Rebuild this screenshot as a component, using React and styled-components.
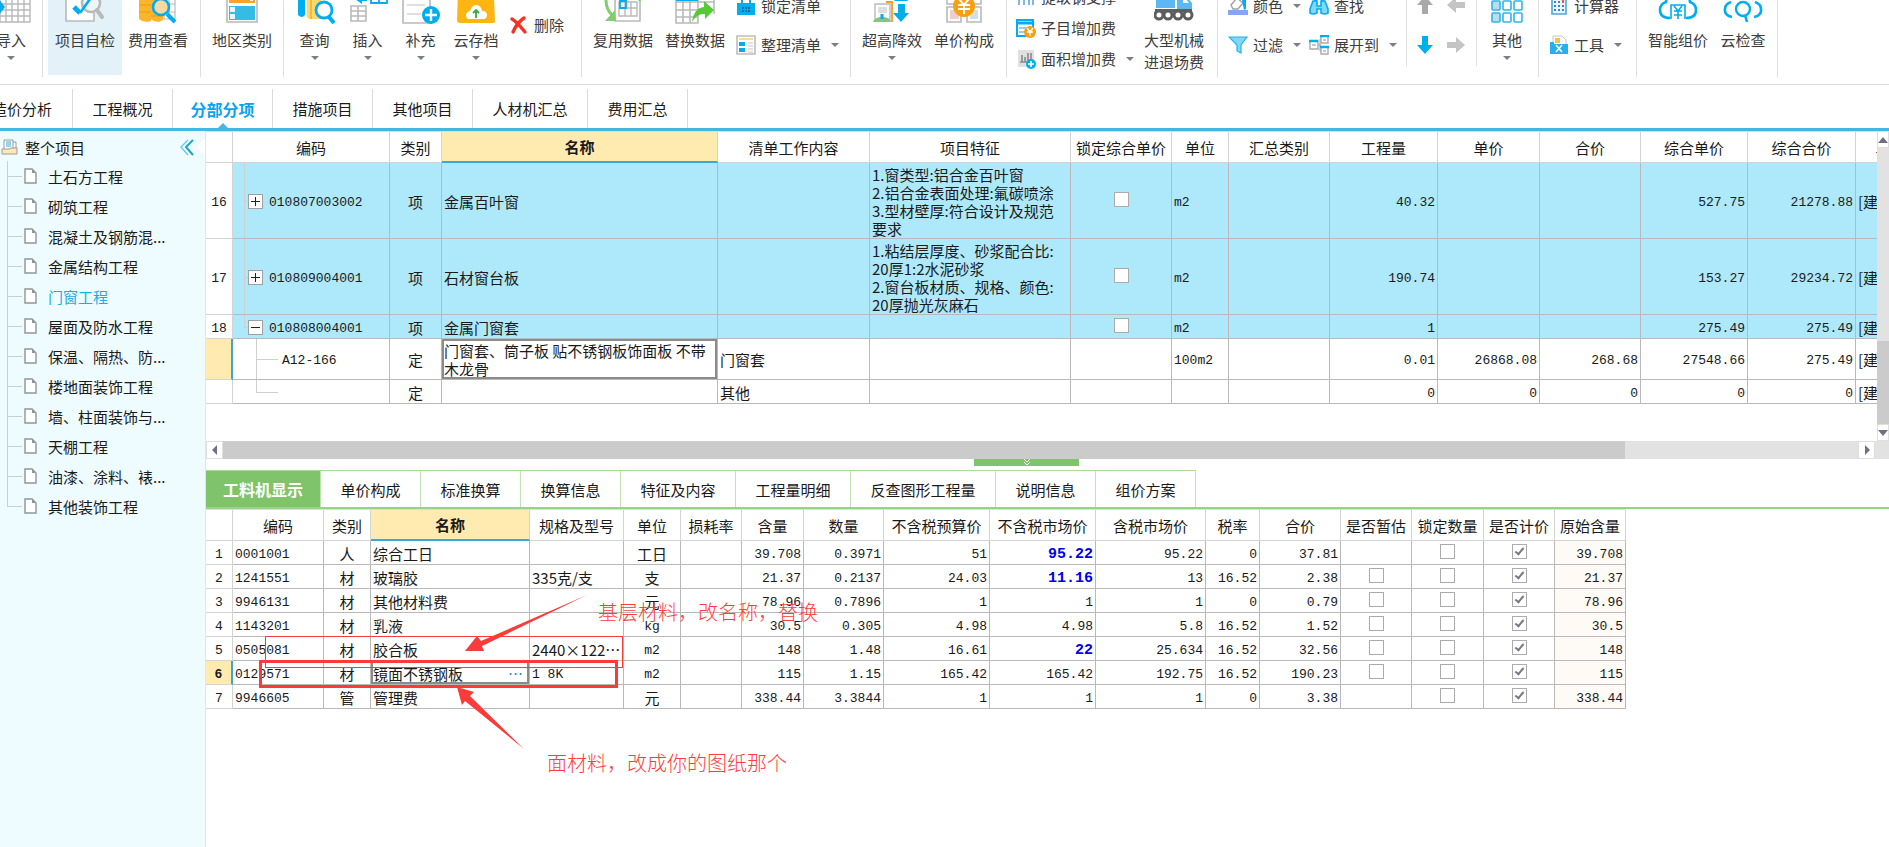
import React from "react";
import styled, { createGlobalStyle, css } from "styled-components";

const Global = createGlobalStyle`
  *, *::before, *::after { box-sizing: border-box; }
  body {
    margin: 0;
    background: #fff;
    color: #1a1a1a;
    font-family: "Noto Sans CJK SC", "Liberation Sans", sans-serif;
    font-size: 15px;
    overflow: hidden;
  }
  button { font: inherit; color: inherit; background: none; border: 0; padding: 0; margin: 0; }
`;

const c = {
  blue: "#00adef",
  line: "#45b5e2",
  gray: "#b9b9b9",
  green: "#7fc46a",
  orange: "#fb9f0c",
  row: "#aee9fb",
  mark: "#fb3a3a",
};

/* ---------- page frame ---------- */

const Page = styled.div`
  min-height: 100vh;
  display: flex;
  flex-direction: column;
`;

const Ribbon = styled.header`
  display: flex;
  height: 85px;
  border-bottom: 1px solid #dcdcdc;
  overflow: hidden;
`;

const Group = styled.section`
  display: flex;
  flex: none;
  width: ${(p) => p.$w}px;
  height: ${(p) => (p.$short ? 66 : 77)}px;
  padding-left: ${(p) => p.$pad || 0}px;
  justify-content: ${(p) => (p.$end ? "flex-end" : "flex-start")};
  border-right: 1px solid #dedede;
`;

const BigButton = styled.button`
  display: flex;
  flex: none;
  flex-direction: column;
  align-items: center;
  width: ${(p) => p.$w || 72}px;
  height: 75px;
  background: ${(p) => (p.$on ? "#e2f2f8" : "none")};
  line-height: 22px;
  white-space: nowrap;
  color: #3c3c3c;

  svg.art { flex: none; width: 40px; height: 36px; margin: -12px 0 5px; }
`;

const Caret = styled.span`
  border: 4px solid transparent;
  border-top-color: #7b7e89;
  border-bottom: 0;
  margin: ${(p) => (p.$below ? "5px 0 0" : "0 0 0 5px")};
`;

const Rows = styled.div`
  display: flex;
  flex: none;
  flex-direction: column;
  align-items: flex-start;
  gap: ${(p) => (p.$three ? 11 : 19)}px;
  margin: ${(p) => (p.$single ? 15 : p.$three ? -13 : -4)}px ${(p) => p.$mr || 0}px 0 ${(p) => p.$ml || 0}px;
`;

const SmallButton = styled.button`
  display: flex;
  align-items: center;
  gap: 5px;
  height: 20px;
  line-height: 20px;
  white-space: nowrap;
  color: #3c3c3c;

  svg { flex: none; width: 20px; height: 20px; }
`;

const Tabs = styled.nav`
  display: flex;
  height: 46px;
  padding-top: 4px;
  border-bottom: 3px solid ${c.line};
`;

const Tab = styled.button`
  position: relative;
  flex: none;
  width: ${(p) => p.$w}px;
  margin-left: ${(p) => p.$shift || 0}px;
  border-right: 1px solid #dcdcdc;
  font-weight: ${(p) => (p.$on ? 700 : 400)};
  font-size: ${(p) => (p.$on ? 16 : 15)}px;
  color: ${(p) => (p.$on ? "#08a4ee" : "#1a1a1a")};

  ${(p) => p.$on && css`
    &::after {
      content: "";
      position: absolute;
      left: 50%;
      bottom: 0;
      margin-left: -5px;
      border: 5px solid transparent;
      border-top: 0;
      border-bottom-color: ${c.line};
    }
  `}
`;

const Body = styled.div`
  display: flex;
  flex: 1;
`;

/* ---------- project tree ---------- */

const Sidebar = styled.aside`
  flex: none;
  width: 206px;
  background: #effcff;
  border-right: 1px solid #dfe7ea;
`;

const SideHead = styled.div`
  display: flex;
  align-items: center;
  height: 30px;
  padding: 2px 0 0 1px;
  gap: 7px;
  span { flex: 1; }
`;

const Collapse = styled.button`
  display: flex;
  align-items: center;
  gap: 2px;
  height: 20px;
`;

const TreeList = styled.ul`
  list-style: none;
  margin: 0;
  padding: 0 0 0 7px;
`;

const TreeItem = styled.li`
  position: relative;
  display: flex;
  align-items: center;
  height: 30px;
  padding-left: 16px;
  color: ${(p) => (p.$on ? "#16aee6" : "#1a1a1a")};

  &::before {
    content: "";
    position: absolute;
    left: 0;
    top: 0;
    height: 100%;
    border-left: 1px solid #c9d0d2;
  }
  &:last-child::before { height: 50%; }
  &::after {
    content: "";
    position: absolute;
    left: 0;
    top: 50%;
    width: 15px;
    border-top: 1px solid #c9d0d2;
  }
  a { color: inherit; text-decoration: none; margin-left: 10px; }
`;

/* ---------- grids ---------- */

const Main = styled.main`
  flex: 1;
  min-width: 0;
`;

const UpperPane = styled.section`
  display: flex;
  height: 310px;
`;

const Clip = styled.div`
  flex: 1;
  min-width: 0;
  overflow: hidden;
`;

const Grid = styled.table`
  table-layout: fixed;
  width: ${(p) => p.$w}px;
  border-collapse: separate;
  border-spacing: 0;
  line-height: 18px;
  border-top: 1px solid #dcdcdc;

  th, td {
    padding: 2px 2px 0;
    overflow: hidden;
    border-right: 1px solid #b9b9b9;
    border-bottom: 1px solid #b9b9b9;
    white-space: nowrap;
  }
  th { border-color: #d3d3d3; font-weight: 400; padding: 1px 0 0; }
`;

const HeadRow = styled.tr`
  height: ${(p) => p.$h}px;
`;

const Th = styled.th`
  ${(p) => p.$on && css`
    && {
      background: #ffebaf;
      font-weight: 700;
      border-bottom: 2px solid #3ba7d5;
    }
  `}
`;

const Tr = styled.tr`
  height: ${(p) => p.$h}px;
  background: ${(p) => (p.$fill ? c.row : "#fff")};
`;

const Td = styled.td`
  text-align: ${(p) => p.$align || "left"};
  background: ${(p) => p.$bg || "transparent"};

  ${(p) => p.$mono && css`
    && { padding-top: 4px; }
    font-family: "Liberation Mono", monospace;
    font-size: 13px;
  `}
  ${(p) => p.$strong && css`
    font-size: 15px;
    font-weight: 700;
    color: #0000f0;
  `}
  ${(p) => p.$selected && css`
    && { background: #fff; box-shadow: inset 0 0 0 2px #8b8b8b; white-space: normal; }
  `}
`;

const CheckCell = styled.td`
  && { padding: 0 0 2px; }
  text-align: center;
`;

const RowNumber = styled.td`
  && {
    background: ${(p) => (p.$on ? "#ffebaf" : "#fff")};
    border-color: #d3d3d3;
    font-family: "Liberation Mono", monospace;
    font-size: 13px;
    font-weight: ${(p) => (p.$on ? 700 : 400)};
    padding: 4px 0 0;
    text-align: center;
    ${(p) => p.$on && "border-right: 2px solid #3ba7d5;"}
  }
`;

const Code = styled(Td)`
  &&& { position: relative; padding: 1px 0 0 ${(p) => (p.$child ? 49 : 15)}px; }

  &::before {
    content: "";
    position: absolute;
    left: ${(p) => (p.$child ? 23 : 11)}px;
    top: 0;
    height: ${(p) => (p.$last ? "50%" : "100%")};
    border-left: 1px solid #cfcfcf;
  }
  &::after {
    content: "";
    position: absolute;
    left: ${(p) => (p.$child ? 23 : 11)}px;
    top: 50%;
    width: ${(p) => (p.$child ? 22 : 4)}px;
    border-top: 1px solid #cfcfcf;
  }
`;

const CodeLine = styled.span`
  display: flex;
  align-items: center;
  gap: 6px;
  span { padding-top: 3px; }
`;

const Expander = styled.button`
  position: relative;
  width: 15px;
  height: 15px;
  border: 1px solid #a0a0a0;
  background: #fff;

  &::before {
    content: "";
    position: absolute;
    left: 2px;
    top: 6px;
    width: 9px;
    height: 1px;
    background: #222;
  }
  &::after {
    content: "";
    position: absolute;
    left: 6px;
    top: 2px;
    width: 1px;
    height: 9px;
    background: ${(p) => (p.$open ? "transparent" : "#222")};
  }
`;

const Check = styled.input`
  appearance: none;
  display: block;
  position: relative;
  width: 15px;
  height: 15px;
  margin: 0 auto;
  border: 1px solid #ababab;
  background: #fff;

  &:checked::after {
    content: "";
    position: absolute;
    left: 4px;
    top: 1px;
    width: 5px;
    height: 9px;
    border: solid #7a7a88;
    border-width: 0 2px 2px 0;
    transform: rotate(40deg);
  }
`;

const NameCell = styled.span`
  display: flex;
  align-items: center;
  justify-content: space-between;
  padding-right: 4px;
  button { color: #2d8fd0; line-height: 18px; }
`;

/* ---------- scroll bars ---------- */

const VBar = styled.div`
  display: flex;
  flex: none;
  flex-direction: column;
  width: 12px;
  background: #e2e2e2;
`;

const HBar = styled.div`
  display: flex;
  height: 18px;
  background: #e2e2e2;
  padding-right: 14px;
`;

const BarButton = styled.button`
  display: flex;
  flex: none;
  align-items: center;
  justify-content: center;
  width: ${(p) => (p.$v ? 12 : 17)}px;
  height: ${(p) => (p.$v ? 17 : 18)}px;
  background: #fff;
  border: 1px solid #dedede;
`;

const Spacer = styled.div`
  flex: ${(p) => p.$grow || 1};
`;

const Thumb = styled.div`
  flex: ${(p) => p.$grow};
  background: #cbcbcb;
`;

/* ---------- lower pane ---------- */

const Splitter = styled.div`
  display: flex;
  justify-content: center;
  height: 11px;
`;

const Handle = styled.button`
  display: flex;
  align-items: center;
  justify-content: center;
  width: 105px;
  height: 7px;
  margin-right: 42px;
  background: ${c.green};
`;

const DetailTabs = styled.nav`
  display: flex;
  height: 39px;
  border-bottom: 2px solid #97d384;
`;

const DetailTab = styled.button`
  flex: none;
  width: ${(p) => p.$w}px;
  border-top: 1px solid #a9dd98;
  border-right: 1px solid #bfe6b1;
  ${(p) => p.$on && css`
    background: ${c.green};
    color: #fff;
    font-size: 16px;
    font-weight: 700;
  `}
`;

const LowerPane = styled.section`
  position: relative;
  overflow: hidden;
`;

const MarkBox = styled.div`
  position: absolute;
  left: ${(p) => p.$x}px;
  top: ${(p) => p.$y}px;
  width: ${(p) => p.$w}px;
  height: ${(p) => p.$h}px;
  border: ${(p) => p.$b}px solid ${c.mark};
  pointer-events: none;
`;

const MarkArrows = styled.svg`
  position: absolute;
  left: 0;
  top: 0;
  width: 400px;
  height: 260px;
  pointer-events: none;
`;

const MarkNote = styled.p`
  position: absolute;
  left: ${(p) => p.$x}px;
  top: ${(p) => p.$y}px;
  margin: 0;
  font-size: 20px;
  font-weight: 300;
  line-height: 28px;
  white-space: nowrap;
  color: #ff3b3b;
`;

const LowerFill = styled.div`
  height: 127px;
`;

/* ---------- icons ---------- */

const Art = ({ children }) => (
  <svg className="art" viewBox="0 0 40 36" fill="none" aria-hidden="true">{children}</svg>
);

const art = {
  importGrid: (
    <Art>
      <path d="M9 2h30v32H9zM9 10h30M9 16h30M9 22h30M9 28h30M15 2v32M21 2v32M27 2v32M33 2v32" stroke={c.gray} strokeWidth="1.4" fill="#fff" />
      <path d="M0 15h7v-5l7 9-7 9v-5H0z" fill={c.blue} />
    </Art>
  ),
  inspect: (
    <Art>
      <path d="M1 2h28v31H1z" fill="#fff" stroke={c.gray} strokeWidth="1.6" />
      <circle cx="26" cy="15" r="9" fill="#eef6fa" stroke={c.gray} strokeWidth="2.6" />
      <path d="M32 22l5 7" stroke={c.gray} strokeWidth="4" strokeLinecap="round" />
      <path d="M9 19l6 6" stroke={c.blue} strokeWidth="5" />
      <path d="M15 25L25 11" stroke={c.blue} strokeWidth="2.6" />
    </Art>
  ),
  cost: (
    <Art>
      <path d="M26 2h11v29H26zM26 9h11M26 16h11M26 24h11M31 2v29" stroke={c.gray} strokeWidth="1.2" fill="#fff" />
      <path d="M1 2h12v31l-3 1-6-1-3-2zM13 10h12v22l-4 2-5-1-3-2z" fill="#fdb52b" />
      <path d="M1 10h12M1 17h12M1 24h12M13 28h12" stroke="#f09a10" strokeWidth="1.2" />
      <circle cx="23" cy="19" r="8" fill="#f8d9a0" stroke={c.blue} strokeWidth="2.6" />
      <path d="M29 26l8 8" stroke={c.blue} strokeWidth="4" />
    </Art>
  ),
  region: (
    <Art>
      <path d="M5 0h30v34H5z" fill="#fff" stroke={c.gray} strokeWidth="1.6" />
      <path d="M7 8h26v7H7z" fill="#fba324" />
      <path d="M28 10h3v3h-3z" fill="#fff" />
      <path d="M7 18h26v14H7z" fill="#35bbe6" />
      <path d="M8 19h5v5H8zM8 26h5v5H8z" fill="#e5f7fd" />
    </Art>
  ),
  query: (
    <Art>
      <path d="M3 3h7v24q-3 4-7 0z" fill={c.blue} />
      <path d="M12 3h14v28H14l-2-2z" fill="#fdd86c" />
      <path d="M16 3v28" stroke="#f5b93a" strokeWidth="2" />
      <circle cx="29" cy="22" r="8" fill="#fff" fillOpacity=".85" stroke={c.blue} strokeWidth="2.8" />
      <path d="M34 29l5 6" stroke={c.blue} strokeWidth="4" />
    </Art>
  ),
  insert: (
    <Art>
      <path d="M3 18h15v15H3zM3 23h15M3 28h15M10 18v15" stroke={c.gray} strokeWidth="1.6" />
      <path d="M23 4h16v11H23zM31 4v11M23 9h16" stroke={c.blue} strokeWidth="1.8" />
      <path d="M7 11l7-6v4h5v4h-5v3z" fill={c.blue} />
    </Art>
  ),
  add: (
    <Art>
      <path d="M2 2h27v33H2z" fill="#fff" stroke={c.gray} strokeWidth="1.6" />
      <path d="M6 17h18M6 26h14" stroke="#d5d5d5" strokeWidth="1.4" />
      <circle cx="30" cy="27" r="9" fill={c.blue} />
      <path d="M24 27h12M30 21v12" stroke="#fff" strokeWidth="2.4" />
    </Art>
  ),
  cloudSave: (
    <Art>
      <path d="M2 4h14l4 6h18l1 23q0 2-3 2H4q-3 0-3-3z" fill="#feb511" />
      <path d="M24 6l3 6M29 5l3 7M34 5l3 7" stroke="#f5e13c" strokeWidth="2" />
      <path d="M13 31q-3 0-3-4 0-3 4-4 2-6 6-6 5 0 6 6 5 0 5 4t-4 4z" fill="#fff" />
      <path d="M20 30v-7M17 25l3-3 3 3" stroke="#35ad3e" strokeWidth="1.8" />
    </Art>
  ),
  reuse: (
    <Art>
      <path d="M12 2h18l7 8v23H12z" fill="#fff" stroke={c.gray} strokeWidth="1.6" />
      <path d="M16 14h18v14H16zM16 20h18M22 8v20M28 14v14" stroke={c.gray} strokeWidth="1.4" />
      <path d="M17 13h6v7h-6z" stroke={c.blue} strokeWidth="1.8" />
      <path d="M3 12q0 9 6 15" stroke="#84cb72" strokeWidth="3" />
      <path d="M2 33h11l-1-11z" fill="#84cb72" />
      <path d="M30 8q7 0 8 6l-5-3z" fill="#84cb72" />
    </Art>
  ),
  replace: (
    <Art>
      <path d="M1 4h22v31H1zM1 14h38M1 22h22M1 29h22M8 4v31M15 4v31M27 4h12v22" stroke={c.gray} strokeWidth="1.6" />
      <path d="M1 12h22" stroke={c.blue} strokeWidth="2" />
      <path d="M17 34q2-14 12-15v-6l10 9-9 9v-5q-8-1-13 8z" fill="#55c936" />
    </Art>
  ),
  height: (
    <Art>
      <path d="M3 16h15v16H3z" stroke={c.gray} strokeWidth="1.4" fill="#fff" />
      <path d="M6 19h9v6H6z" fill="#dedede" />
      <path d="M14 14h6v20" stroke={c.orange} strokeWidth="1.8" />
      <path d="M1 34q2-5 9-5 8 0 9 5z" fill="#85c77a" />
      <path d="M10 26v5" stroke={c.blue} strokeWidth="3" />
      <path d="M22 13h14l-4-5h-6z" fill={c.blue} />
      <path d="M26 16h7v9h4l-8 9-8-9h5z" fill={c.blue} />
    </Art>
  ),
  price: (
    <Art>
      <path d="M3 19h14v15H3zM23 19h14v15H23zM3 2h14v14H3zM23 2h14v14H23z" stroke={c.gray} strokeWidth="1.6" fill="#fff" />
      <path d="M6 22h9v9H6z" fill="#edcfd0" />
      <path d="M26 22h8v9h-8z" fill="#cfe0ea" />
      <circle cx="20" cy="18" r="11" fill={c.orange} />
      <path d="M15 11l5 6 5-6M14 17h12M14 21h12M20 17v9" stroke="#fff" strokeWidth="2" />
    </Art>
  ),
  truck: (
    <Art>
      <path d="M2 2h19v18H2z" fill="#5cb8f5" />
      <path d="M23 8h9l6 7v6H23z" fill="#5cb8f5" />
      <path d="M29 11h3l3 4h-6z" fill="#fff" />
      <path d="M1 21h37v3H1z" fill="#5d5d5d" />
      <g fill="#fff" stroke="#5d5d5d" strokeWidth="3">
        <circle cx="5" cy="27" r="4" /><circle cx="14" cy="27" r="4" />
        <circle cx="24" cy="27" r="4" /><circle cx="34" cy="27" r="4" />
      </g>
    </Art>
  ),
  other: (
    <Art>
      {[2, 13, 25].map((y) => [5, 16, 27].map((x) => (
        <rect key={`${x}-${y}`} x={x} y={y} width="8" height="9" rx="1" fill={x === 5 ? "#bcdcf0" : "#fff"} stroke="#2db5ea" strokeWidth="1.6" />
      )))}
    </Art>
  ),
  cloudPrice: (
    <Art>
      <path d="M12 30q-10 0-10-8 0-6 6-8 1-10 12-10t12 10q6 2 6 8 0 8-10 8" stroke={c.blue} strokeWidth="2.6" />
      <path d="M13 31V17h14v14M16 18l4 5 4-5M16 23h8M16 27h8M20 23v8" stroke={c.blue} strokeWidth="1.6" />
    </Art>
  ),
  cloudCheck: (
    <Art>
      <path d="M9 29q-8-2-7-8 0-5 6-7M31 29q8-2 7-8 0-5-6-7M10 10Q14 4 20 4t10 6" stroke={c.blue} strokeWidth="2.6" />
      <circle cx="20" cy="21" r="7" stroke={c.blue} strokeWidth="2.4" />
      <path d="M22 27l2 7" stroke={c.blue} strokeWidth="2.6" />
    </Art>
  ),
};

const Mini = ({ children }) => (
  <svg viewBox="0 0 20 20" fill="none" aria-hidden="true">{children}</svg>
);

const mini = {
  remove: <Mini><path d="M3 4q4 2 13 13M15 3Q8 8 4 17" stroke="#f03325" strokeWidth="3.4" strokeLinecap="round" /></Mini>,
  lock: (
    <Mini>
      <path d="M6 9V3h8v6" stroke="#1ba3dc" strokeWidth="2" />
      <path d="M1 7h18v12H1z" fill={c.blue} />
      <path d="M6 12h8M6 15h8" stroke="#0a73a8" strokeWidth="2" strokeDasharray="2 1" />
    </Mini>
  ),
  arrange: (
    <Mini>
      <path d="M1 1h18v18H1z" fill="#fff" stroke="#bdbdbd" strokeWidth="1.6" />
      <path d="M3 4h14" stroke="#fbdc92" strokeWidth="2" />
      <path d="M3 7h6v4H3zM3 13h6v4H3z" fill={c.blue} />
      <path d="M12 8h5M12 11h5M12 14h5M12 17h5" stroke="#c4c4c4" />
    </Mini>
  ),
  steel: <Mini><path d="M3 4v14M8 4v14M13 4v14M17 4v14" stroke="#7fb9dd" strokeWidth="2" /></Mini>,
  subFee: (
    <Mini>
      <path d="M1 2h16v16H1z" fill="#fff" stroke={c.blue} strokeWidth="2" />
      <path d="M1 5h16" stroke={c.blue} strokeWidth="3" />
      <path d="M3 10h8M3 14h6" stroke={c.blue} />
      <circle cx="14" cy="14" r="6" fill={c.orange} />
      <path d="M11 10l3 4 3-4M11 14h6M14 14v4" stroke="#fff" strokeWidth="1.4" />
    </Mini>
  ),
  areaFee: (
    <Mini>
      <path d="M2 1h16v17H2z" fill="#e0e0e0" />
      <path d="M4 13h10M6 13V6M9 13V8M12 13V4M15 12V4" stroke="#8a8a8a" strokeWidth="1.6" />
      <circle cx="15" cy="15" r="5" fill={c.blue} />
      <path d="M12 15h6M15 12v6" stroke="#fff" strokeWidth="1.6" />
    </Mini>
  ),
  color: (
    <Mini>
      <path d="M3 9l6-7 6 5-5 6H5z" fill="#fff" stroke="#a0a0a0" strokeWidth="1.4" />
      <path d="M14 4h4v9l-2 1z" fill={c.blue} />
      <path d="M0 14h20v5H0z" fill="#86a5f6" />
    </Mini>
  ),
  find: (
    <Mini>
      <path d="M4 5h4v5h4V5h4l3 8v4q-3 2-7 0v-4H8v4q-4 2-7 0v-4z" fill="#7fd8f7" stroke={c.blue} strokeWidth="1.6" />
      <path d="M5 2h3v3H5zM12 2h3v3h-3z" fill={c.blue} />
    </Mini>
  ),
  filter: <Mini><path d="M1 2h18l-6 8v8l-4-2v-6z" fill="#7fd8f7" stroke="#22b4ea" strokeWidth="1.2" /></Mini>,
  expand: (
    <Mini>
      <path d="M9 10h3M11 4v12M11 4h2M11 16h2" stroke="#a5a5a5" />
      <path d="M1 6h8v8H1zM12 1h7v7h-7zM12 12h7v7h-7z" fill="#fff" stroke="#aaa" strokeWidth="1.4" />
      <path d="M3 10h4M14 5h3M14 16h3" stroke="#c9b09a" strokeWidth="1.4" />
      <path d="M0 6h9M11 1h9M11 12h9" stroke={c.blue} strokeWidth="2.4" />
    </Mini>
  ),
  up: <Mini><path d="M10 0l8 9h-5v9H7V9H2z" fill="#a9a9a9" /></Mini>,
  left: <Mini><path d="M1 9l9-8v5h9v6h-9v5z" fill="#c4c4c4" /></Mini>,
  down: <Mini><path d="M10 19l8-9h-5V1H7v9H2z" fill={c.blue} /></Mini>,
  right: <Mini><path d="M19 10l-9-8v5H1v6h9v5z" fill="#c4c4c4" /></Mini>,
  calc: (
    <Mini>
      <path d="M3 1h14v17H3z" fill="#eaf5fb" stroke="#4ba9dc" strokeWidth="1.6" />
      <path d="M5 6h10M5 10h10M5 14h10" stroke="#3a82c9" strokeWidth="2" strokeDasharray="2 2" />
      <path d="M13 4h2v3h-2z" fill="#f05545" />
    </Mini>
  ),
  tool: (
    <Mini>
      <path d="M4 1h9l4 4v6H4z" fill="#fff" stroke="#c6c6c6" />
      <path d="M6 3h5v5H6z" fill="#f9c23c" />
      <path d="M1 7h4v2h14v10H1z" fill="#25b0ea" />
      <path d="M7 10l6 7M13 10l-6 7" stroke="#fff" strokeWidth="1.6" />
    </Mini>
  ),
};

const PageIcon = () => (
  <svg width="15" height="17" viewBox="0 0 15 17" aria-hidden="true">
    <path d="M2 1h7l4 4v10H2z" fill="#fff" stroke="#8e9698" strokeWidth="1.4" />
    <path d="M9 1v4h4z" fill="#8e9698" />
  </svg>
);

const ProjectIcon = () => (
  <svg width="17" height="16" viewBox="0 0 17 16" fill="none" aria-hidden="true">
    <path d="M9 3h6v11H9z" fill="#fff" stroke="#9a9a9a" />
    <path d="M3 1h9v10H3z" fill="#fff" stroke="#9a9a9a" />
    <path d="M5 3h5M5 5h5M5 7h5" stroke="#2ea8dc" />
    <path d="M1 10h8l1-1h6v6H1z" fill="#ffeab5" stroke="#9a9a9a" />
  </svg>
);

const Triangle = ({ d }) => (
  <svg width="10" height="10" viewBox="0 0 10 10" aria-hidden="true"><path d={d} fill="#6f7180" /></svg>
);

const Big = ({ icon, text, arrow, w, on }) => (
  <BigButton $w={w} $on={on}>
    {icon}
    <span>{text}</span>
    {arrow && <Caret $below />}
  </BigButton>
);

const Small = ({ icon, text, arrow, label }) => (
  <SmallButton aria-label={label}>
    {icon}
    {text}
    {arrow && <Caret />}
  </SmallButton>
);

/* ---------- data ---------- */

const treeItems = ["土石方工程", "砌筑工程", "混凝土及钢筋混...", "金属结构工程", "门窗工程", "屋面及防水工程", "保温、隔热、防...", "楼地面装饰工程", "墙、柱面装饰与...", "天棚工程", "油漆、涂料、裱...", "其他装饰工程"];

const listCols = [
  ["", 27], ["编码", 157], ["类别", 52], ["名称", 276], ["清单工作内容", 152], ["项目特征", 201], ["锁定综合单价", 101],
  ["单位", 57], ["汇总类别", 101], ["工程量", 108], ["单价", 102], ["合价", 101], ["综合单价", 107], ["综合合价", 108], ["单价构成文件", 130],
];

const listRows = [
  { no: "16", h: 76, code: "010807003002", kind: "项", name: "金属百叶窗", work: "", spec: ["1.窗类型:铝合金百叶窗", "2.铝合金表面处理:氟碳喷涂", "3.型材壁厚:符合设计及规范", "要求"], unit: "m2", nums: ["40.32", "", "", "527.75", "21278.88"] },
  { no: "17", h: 76, code: "010809004001", kind: "项", name: "石材窗台板", work: "", spec: ["1.粘结层厚度、砂浆配合比:", "20厚1:2水泥砂浆", "2.窗台板材质、规格、颜色:", "20厚抛光灰麻石"], unit: "m2", nums: ["190.74", "", "", "153.27", "29234.72"] },
  { no: "18", h: 24, open: true, code: "010808004001", kind: "项", name: "金属门窗套", work: "", spec: [], unit: "m2", nums: ["1", "", "", "275.49", "275.49"] },
  { no: "", h: 41, child: true, current: true, code: "A12-166", kind: "定", name: "门窗套、筒子板 贴不锈钢板饰面板 不带木龙骨", work: "门窗套", spec: [], unit: "100m2", nums: ["0.01", "26868.08", "268.68", "27548.66", "275.49"] },
  { no: "", h: 24, child: true, code: "", kind: "定", name: "", work: "其他", spec: [], unit: "", nums: ["0", "0", "0", "0", "0"] },
];

const detailTabs = [["工料机显示", 115], ["单价构成", 100], ["标准换算", 100], ["换算信息", 100], ["特征及内容", 115], ["工程量明细", 115], ["反查图形工程量", 145], ["说明信息", 100], ["组价方案", 100]];

const detailCols = [
  ["", 27], ["编码", 91], ["类别", 47], ["名称", 159], ["规格及型号", 94], ["单位", 57], ["损耗率", 61], ["含量", 62], ["数量", 80],
  ["不含税预算价", 106], ["不含税市场价", 106], ["含税市场价", 110], ["税率", 54], ["合价", 81], ["是否暂估", 71], ["锁定数量", 72], ["是否计价", 71], ["原始含量", 71],
];

const detailRows = [
  ["0001001", "人", "综合工日", "", "工日", "39.708", "0.3971", "51", "95.22", "95.22", "0", "37.81", false, true],
  ["1241551", "材", "玻璃胶", "335克/支", "支", "21.37", "0.2137", "24.03", "11.16", "13", "16.52", "2.38", true, true],
  ["9946131", "材", "其他材料费", "", "元", "78.96", "0.7896", "1", "1", "1", "0", "0.79", true],
  ["1143201", "材", "乳液", "", "kg", "30.5", "0.305", "4.98", "4.98", "5.8", "16.52", "1.52", true],
  ["0505081", "材", "胶合板", "2440×122⋯", "m2", "148", "1.48", "16.61", "22", "25.634", "16.52", "32.56", true, true],
  ["0129571", "材", "镜面不锈钢板", "1 8K", "m2", "115", "1.15", "165.42", "165.42", "192.75", "16.52", "190.23", true],
  ["9946605", "管", "管理费", "", "元", "338.44", "3.3844", "1", "1", "1", "0", "3.38", false],
];

const total = (cols) => cols.reduce((sum, [, w]) => sum + w, 0);

const GridHead = ({ cols, h }) => (
  <>
    <colgroup>{cols.map(([t, w], i) => <col key={i} style={{ width: w }} />)}</colgroup>
    <thead>
      <HeadRow $h={h}>
        {cols.map(([t], i) => <Th key={i} scope="col" $on={t === "名称"}>{t}</Th>)}
      </HeadRow>
    </thead>
  </>
);

function BillTable() {
  return (
    <Grid $w={total(listCols)}>
      <GridHead cols={listCols} h={31} />
      <tbody>
        {listRows.map((r, i) => (
          <Tr key={i} $h={r.h} $fill={!r.child}>
            <RowNumber $on={r.current}>{r.no}</RowNumber>
            <Code $mono $child={r.child} $last={r.open || (r.child && !r.code)}>
              <CodeLine>
                {!r.child && <Expander $open={r.open} aria-label={`展开 ${r.code}`} />}
                <span>{r.code}</span>
              </CodeLine>
            </Code>
            <Td $align="center">{r.kind}</Td>
            <Td $selected={r.current}>{r.name}</Td>
            <Td>{r.work}</Td>
            <Td>{r.spec.map((s) => <div key={s}>{s}</div>)}</Td>
            <CheckCell>{!r.child && <Check type="checkbox" aria-label={`锁定综合单价 ${r.code}`} />}</CheckCell>
            <Td $mono>{r.unit}</Td>
            <Td />
            {r.nums.map((n, k) => <Td key={k} $mono $align="right">{n}</Td>)}
            <Td>[建筑工程]</Td>
          </Tr>
        ))}
      </tbody>
    </Grid>
  );
}

function DetailTable() {
  return (
    <Grid $w={total(detailCols)}>
      <GridHead cols={detailCols} h={31} />
      <tbody>
        {detailRows.map(([code, kind, name, spec, unit, amount, qty, budget, market, taxed, rate, sum, estimate, changed], i) => {
          const current = i === 5;
          return (
            <Tr key={code} $h={24}>
              <RowNumber $on={current}>{i + 1}</RowNumber>
              <Td $mono>{code}</Td>
              <Td $align="center">{kind}</Td>
              <Td $selected={current}>
                {current ? <NameCell>{name}<button aria-label="选择材料">⋯</button></NameCell> : name}
              </Td>
              <Td $mono={current}>{spec}</Td>
              <Td $align="center" $mono={/^[a-z]/.test(unit)}>{unit}</Td>
              <Td />
              <Td $mono $align="right">{amount}</Td>
              <Td $mono $align="right">{qty}</Td>
              <Td $mono $align="right">{budget}</Td>
              <Td $mono $align="right" $strong={changed}>{market}</Td>
              <Td $mono $align="right">{taxed}</Td>
              <Td $mono $align="right">{rate}</Td>
              <Td $mono $align="right">{sum}</Td>
              <CheckCell>{estimate && <Check type="checkbox" aria-label={`是否暂估 ${code}`} />}</CheckCell>
              <CheckCell><Check type="checkbox" aria-label={`锁定数量 ${code}`} /></CheckCell>
              <CheckCell><Check type="checkbox" defaultChecked aria-label={`是否计价 ${code}`} /></CheckCell>
              <Td $mono $align="right" $bg="#fefaf5">{amount}</Td>
            </Tr>
          );
        })}
      </tbody>
    </Grid>
  );
}

export default function App() {
  return (
    <Page>
      <Global />
      <Ribbon>
        <Group $w={43} $end><Big icon={art.importGrid} text="导入" w={62} arrow /></Group>
        <Group $w={158} $pad={5}>
          <Big icon={art.inspect} text="项目自检" w={74} on />
          <Big icon={art.cost} text="费用查看" />
        </Group>
        <Group $w={83}><Big icon={art.region} text="地区类别" w={82} /></Group>
        <Group $w={298} $pad={4}>
          <Big icon={art.query} text="查询" w={53} arrow />
          <Big icon={art.insert} text="插入" w={53} arrow />
          <Big icon={art.add} text="补充" w={53} arrow />
          <Big icon={art.cloudSave} text="云存档" w={58} arrow />
          <Rows $single $ml={4}>
            <Small icon={mini.remove} text="删除" />
          </Rows>
        </Group>
        <Group $w={269} $pad={5}>
          <Big icon={art.reuse} text="复用数据" />
          <Big icon={art.replace} text="替换数据" />
          <Rows $ml={5}>
            <Small icon={mini.lock} text="锁定清单" />
            <Small icon={mini.arrange} text="整理清单" arrow />
          </Rows>
        </Group>
        <Group $w={156} $pad={5}>
          <Big icon={art.height} text="超高降效" arrow />
          <Big icon={art.price} text="单价构成" />
        </Group>
        <Group $w={211} $pad={9}>
          <Rows $three $mr={4}>
            <Small icon={mini.steel} text="提取钢支撑" />
            <Small icon={mini.subFee} text="子目增加费" />
            <Small icon={mini.areaFee} text="面积增加费" arrow />
          </Rows>
          <Big icon={art.truck} text={<>大型机械<br />进退场费</>} />
        </Group>
        <Group $w={189} $short $pad={10}>
          <Rows $mr={8}>
            <Small icon={mini.color} text="颜色" arrow />
            <Small icon={mini.filter} text="过滤" arrow />
          </Rows>
          <Rows>
            <Small icon={mini.find} text="查找" />
            <Small icon={mini.expand} text="展开到" arrow />
          </Rows>
        </Group>
        <Group $w={70} $short $pad={8}>
          <Rows $mr={11}>
            <Small icon={mini.up} label="上移" />
            <Small icon={mini.down} label="下移" />
          </Rows>
          <Rows>
            <Small icon={mini.left} label="升级" />
            <Small icon={mini.right} label="降级" />
          </Rows>
        </Group>
        <Group $w={62}><Big icon={art.other} text="其他" w={60} arrow /></Group>
        <Group $w={98} $pad={10}>
          <Rows>
            <Small icon={mini.calc} text="计算器" />
            <Small icon={mini.tool} text="工具" arrow />
          </Rows>
        </Group>
        <Group $w={141} $pad={5}>
          <Big icon={art.cloudPrice} text="智能组价" />
          <Big icon={art.cloudCheck} text="云检查" w={58} />
        </Group>
      </Ribbon>

      <Tabs>
        <Tab $w={101} $shift={-28}>造价分析</Tab>
        <Tab $w={100}>工程概况</Tab>
        <Tab $w={100} $on>分部分项</Tab>
        <Tab $w={100}>措施项目</Tab>
        <Tab $w={100}>其他项目</Tab>
        <Tab $w={115}>人材机汇总</Tab>
        <Tab $w={100}>费用汇总</Tab>
      </Tabs>

      <Body>
        <Sidebar>
          <SideHead>
            <ProjectIcon />
            <span>整个项目</span>
            <Collapse aria-label="收起">
              <svg width="15" height="17" viewBox="0 0 15 17" fill="none" aria-hidden="true">
                <path d="M8 1L1 8l7 8" stroke="#6cc7e6" strokeWidth="1.4" />
                <path d="M13 1L6 8l7 8" stroke="#1ea4d2" strokeWidth="2" />
              </svg>
              <svg width="8" height="18" viewBox="0 0 8 18" aria-hidden="true"><path d="M8 0v18L0 9z" fill="#fff" /></svg>
            </Collapse>
          </SideHead>
          <TreeList>
            {treeItems.map((t) => (
              <TreeItem key={t} $on={t === "门窗工程"}>
                <PageIcon />
                <a href="#list">{t}</a>
              </TreeItem>
            ))}
          </TreeList>
        </Sidebar>

        <Main>
          <UpperPane id="list">
            <Clip><BillTable /></Clip>
            <VBar>
              <BarButton $v aria-label="向上滚动"><Triangle d="M0 8L5 2l5 6z" /></BarButton>
              <Spacer $grow={193} />
              <Thumb $grow={83} />
              <BarButton $v aria-label="向下滚动"><Triangle d="M0 2l5 6 5-6z" /></BarButton>
            </VBar>
          </UpperPane>
          <HBar>
            <BarButton aria-label="向左滚动"><Triangle d="M7 0v10L2 5z" /></BarButton>
            <Thumb $grow={1402} />
            <Spacer $grow={233} />
            <BarButton aria-label="向右滚动"><Triangle d="M3 0v10l5-5z" /></BarButton>
          </HBar>
          <Splitter>
            <Handle aria-label="折叠">
              <svg width="10" height="7" viewBox="0 0 10 7" fill="none" aria-hidden="true"><path d="M2 0l3 3 3-3M2 3l3 3 3-3" stroke="#fff" /></svg>
            </Handle>
          </Splitter>
          <DetailTabs>
            {detailTabs.map(([t, w], i) => <DetailTab key={t} $w={w} $on={i === 0}>{t}</DetailTab>)}
          </DetailTabs>
          <LowerPane>
            <DetailTable />
            <LowerFill />
            <MarkBox $x={59} $y={127} $w={358} $h={32} $b={1} />
            <MarkBox $x={53} $y={151} $w={359} $h={28} $b={3} />
            <MarkArrows viewBox="0 0 400 260" aria-hidden="true">
              <path d="M259 142l12-15 4 5L381 86 276 137l2 5z" fill={c.mark} />
              <path d="M251 178l17 5-4 4 54 53-59-48-3 4z" fill={c.mark} />
            </MarkArrows>
            <MarkNote $x={392} $y={89}>基层材料，改名称，替换</MarkNote>
            <MarkNote $x={341} $y={240}>面材料，改成你的图纸那个</MarkNote>
          </LowerPane>
        </Main>
      </Body>
    </Page>
  );
}
